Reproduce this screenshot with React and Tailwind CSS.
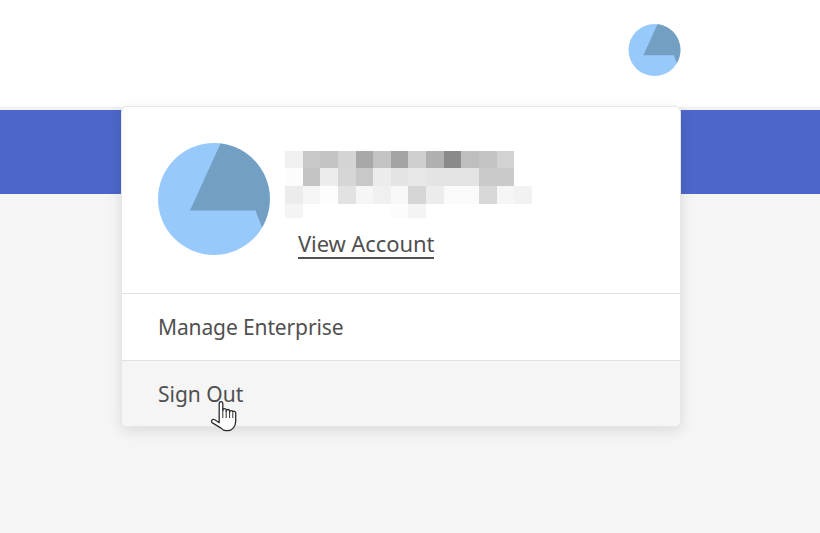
const mosaic = [
  ['bg-[#f0f0f0]', 'bg-[#c8c8c8]', 'bg-[#c4c4c4]', 'bg-[#d4d4d4]', 'bg-[#a8a8a8]', 'bg-[#c4c4c4]', 'bg-[#a4a4a4]', 'bg-[#cfcfcf]', 'bg-[#b0b0b0]', 'bg-[#8a8a8a]', 'bg-[#bebebe]', 'bg-[#c4c4c4]', 'bg-[#d2d2d2]', 'bg-white'],
  ['bg-[#fcfcfc]', 'bg-[#c4c4c4]', 'bg-[#ececec]', 'bg-[#d6d6d6]', 'bg-[#c8c8c8]', 'bg-[#ececec]', 'bg-[#e4e4e4]', 'bg-[#e8e8e8]', 'bg-[#e4e4e4]', 'bg-[#e4e4e4]', 'bg-[#e4e4e4]', 'bg-[#cacaca]', 'bg-[#cacaca]', 'bg-white'],
  ['bg-[#ececec]', 'bg-[#f6f6f6]', 'bg-[#fdfdfd]', 'bg-[#e2e2e2]', 'bg-[#f6f6f6]', 'bg-[#f0f0f0]', 'bg-[#f8f8f8]', 'bg-[#d6d6d6]', 'bg-[#ececec]', 'bg-[#fafafa]', 'bg-[#fafafa]', 'bg-[#d8d8d8]', 'bg-[#f6f6f6]', 'bg-[#f2f2f2]'],
  ['bg-[#f4f4f4]', 'bg-white', 'bg-white', 'bg-white', 'bg-white', 'bg-white', 'bg-[#fcfcfc]', 'bg-[#f4f4f4]', 'bg-white', 'bg-white', 'bg-white', 'bg-white', 'bg-white', 'bg-white'],
];

const Avatar = ({ className }) => (
  <svg viewBox="0 0 112 112" className={className}>
    <circle cx="56" cy="56" r="56" fill="#98c9fb" />
    <path d="M62.5 0.4 A56 56 0 0 1 104 84.5 L97.5 67.5 H32 Z" fill="#739fc3" />
  </svg>
);

const HandCursor = () => (
  <svg viewBox="0 0 40 40" className="h-[40px] w-[40px]">
    <path
      d="M14.2 9c0-3.2 3.6-3.2 3.6 0v6.5c0-2.6 3.4-2.6 3.4 0v.8c0-2.4 3.4-2.4 3.4 0v.9c0-2.2 3.2-2.2 3.2 0 .2-1.5 2.9-1.2 2.9.8v8.3c0 5-3.4 9.4-8 9.4h-1.4c-2.5 0-4-1-5.6-2.8L7 27.6c-1.5-1.9.6-4 2.8-2.8l4.4 2.9V9z"
      fill="#fff"
      stroke="#2e2e2e"
      strokeWidth="1.3"
      strokeLinejoin="round"
    />
    <path d="M17.8 15v8M21.2 16v7M24.6 17v6M27.8 18v5" fill="none" stroke="#2e2e2e" strokeWidth="1" />
  </svg>
);

export default function App() {
  return (
    <div className="relative flex h-[533px] w-[820px] flex-col overflow-hidden bg-[#f5f5f5] font-['Noto_Sans',sans-serif] text-[#505050]">
      <header className="flex h-[110px] items-start justify-end border-b-[3px] border-[#f1f1f1] bg-white pr-[139px] pt-[24px]">
        <Avatar className="h-[52px] w-[53px]" />
      </header>
      <div className="h-[84px] bg-[#4d66c9]" />

      <div className="absolute left-[121px] top-[106px] w-[560px] rounded-[6px] border border-[#e6e6e6] bg-white shadow-[0_4px_14px_rgba(0,0,0,0.11)]">
        <div className="flex h-[187px] items-start gap-[15px] border-b border-[#e1e1e1] pl-[36px] pt-[36px]">
          <Avatar className="h-[112px] w-[112px] shrink-0" />
          <div className="pt-[8px]">
            <div className="grid h-[67px] w-[247px] grid-cols-14 grid-rows-[17px_18px_18px_14px]">
              {mosaic.flat().map((color, i) => (
                <div key={i} className={color} />
              ))}
            </div>
            <a className="ml-[13px] mt-[11px] inline-block border-b-2 border-[#505050] text-[22px] leading-[28px] tracking-[-0.1px]">
              View Account
            </a>
          </div>
        </div>
        <div className="flex h-[67px] items-center border-b border-[#e1e1e1] pl-[36px] pt-[2px] text-[21px] tracking-[-0.12px]">
          Manage Enterprise
        </div>
        <div className="flex h-[65px] items-center rounded-b-[6px] bg-[#f5f5f5] pl-[36px] pt-[2px] text-[21px]">
          Sign Out
        </div>
      </div>

      <div className="absolute left-[205px] top-[395px]">
        <HandCursor />
      </div>
    </div>
  );
}
